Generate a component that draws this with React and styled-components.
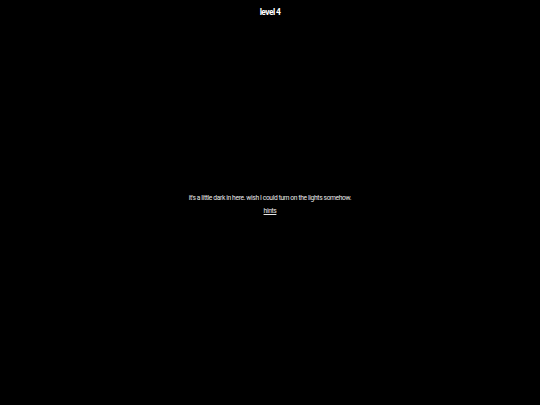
import React from "react";
import styled, { createGlobalStyle } from "styled-components";

const Global = createGlobalStyle`
  html, body { margin: 0; padding: 0; background: #000; }
  body { font-family: Roboto, "Liberation Sans", Arial, sans-serif; color: #fff; }
`;

const Page = styled.div`
  height: 405px;
  display: flex;
  flex-direction: column;
  align-items: center;
`;

const Title = styled.h1`
  margin: 7px 0 0;
  font-size: 8.5px;
  font-weight: bold;
  line-height: 11px;
  letter-spacing: -0.6px;
`;

const Center = styled.main`
  flex: 1;
  display: flex;
  flex-direction: column;
  align-items: center;
  justify-content: center;
  gap: 4px;
  padding-bottom: 14px;
`;

const Message = styled.p`
  margin: 0;
  font-size: 6.7px;
  line-height: 9px;
  letter-spacing: -0.36px;
  color: #e8e8e8;
`;

const HintLink = styled.a`
  font-size: 6.7px;
  line-height: 9px;
  letter-spacing: -0.36px;
  color: #e8e8e8;
  text-decoration: underline;
`;

export default function App() {
  return (
    <>
      <Global />
      <Page>
        <Title>level 4</Title>
        <Center>
          <Message>it's a little dark in here. wish I could turn on the lights somehow.</Message>
          <HintLink href="#">hints</HintLink>
        </Center>
      </Page>
    </>
  );
}
